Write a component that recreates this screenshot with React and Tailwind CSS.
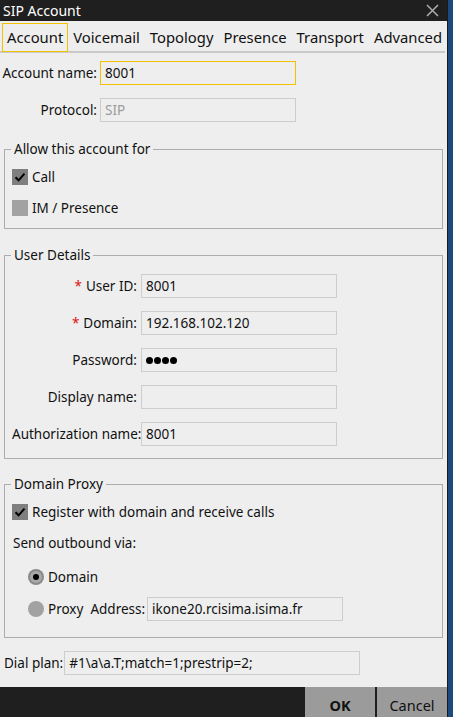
import React from 'react';

const font = { fontFamily: '"Noto Sans", "Open Sans", sans-serif' };

const Field = ({ value, className = '', active = false, muted = false }) => (
  <div
    className={`h-[24px] flex items-center px-[4px] bg-[#eeeeee] border ${
      active ? 'border-[#f2c200]' : 'border-[#cdcdcd]'
    } ${muted ? 'text-[#9c9c9c]' : 'text-[#111]'} ${className}`}
  >
    {value}
  </div>
);

const Check = ({ checked }) => (
  <span
    className={`w-[16px] h-[16px] flex items-center justify-center shrink-0 ${
      checked ? 'bg-[#7f7f7f]' : 'bg-[#a2a2a2]'
    }`}
  >
    {checked && (
      <svg width="12" height="12" viewBox="0 0 12 12">
        <path d="M1.5 6.2 L4.6 9.3 L10.5 2.6" fill="none" stroke="#000" strokeWidth="2" />
      </svg>
    )}
  </span>
);

const Radio = ({ checked }) => (
  <span
    className={`w-[16px] h-[16px] rounded-full flex items-center justify-center shrink-0 ${
      checked ? 'bg-[#8a8a8a]' : 'bg-[#a2a2a2]'
    }`}
  >
    {checked && (
      <span className="w-[12px] h-[12px] rounded-full bg-[#a8a8a8] flex items-center justify-center">
        <span className="w-[6px] h-[6px] rounded-full bg-black" />
      </span>
    )}
  </span>
);

const Group = ({ title, className = '', children }) => (
  <fieldset className={`mx-[4px] w-[439px] border border-[#acacac] px-[7px] ${className}`}>
    <legend className="-ml-[1px] px-[3px] leading-[20px]">{title}</legend>
    {children}
  </fieldset>
);

const DetailRow = ({ label, required, value, className = '' }) => (
  <div className={`flex items-center ${className}`}>
    <div className="w-[129px] text-right pr-[4px] whitespace-nowrap">
      {required && <span className="text-[#e01010] mr-[4px]">*</span>}
      {label}
    </div>
    <Field value={value} className="w-[196px]" />
  </div>
);

const Dots = () => (
  <span className="flex gap-[1px]">
    <span className="w-[7px] h-[7px] rounded-full bg-black" />
    <span className="w-[7px] h-[7px] rounded-full bg-black" />
    <span className="w-[7px] h-[7px] rounded-full bg-black" />
    <span className="w-[7px] h-[7px] rounded-full bg-black" />
  </span>
);

const tabs = ['Account', 'Voicemail', 'Topology', 'Presence', 'Transport', 'Advanced'];

export default function App() {
  return (
    <div className="w-[453px] h-[717px] flex bg-[#1b4a7e] text-[13.5px] text-[#111]" style={font}>
      <div className="w-[448px] h-full flex flex-col bg-[#eeeeee] border-r border-[#1a1a1a]">
        {/* title bar */}
        <div className="h-[21px] bg-[#1f1f1f] flex items-center justify-between pl-[3px] pr-[8px] shrink-0">
          <span className="text-white text-[14px] leading-none">SIP Account</span>
          <svg width="13" height="13" viewBox="0 0 13 13">
            <path d="M1 1 L12 12 M12 1 L1 12" stroke="#a9a9a9" strokeWidth="1.6" />
          </svg>
        </div>

        {/* tabs */}
        <div className="h-[32px] mr-[2px] flex items-start pt-[2px] pl-[2px] border-b-2 border-[#c9c9c9] shrink-0">
          {tabs.map((t, i) => (
            <div
              key={t}
              className={`h-[29px] px-[4px] flex items-center text-[14.8px] whitespace-nowrap border ${
                i === 0 ? 'border-[#f2c200]' : 'border-transparent'
              }`}
            >
              {t}
            </div>
          ))}
        </div>

        {/* account / protocol */}
        <div className="flex items-center mt-[8px]">
          <div className="w-[100px] text-right pr-[3px] whitespace-nowrap">Account name:</div>
          <Field value="8001" active className="w-[196px]" />
        </div>
        <div className="flex items-center mt-[13px]">
          <div className="w-[100px] text-right pr-[3px]">Protocol:</div>
          <Field value="SIP" muted className="w-[196px]" />
        </div>

        <Group title="Allow this account for" className="mt-[17px] pb-[10px]">
          <div className="flex items-center gap-[4px] h-[20px] mt-[8px]">
            <Check checked />
            <span>Call</span>
          </div>
          <div className="flex items-center gap-[4px] h-[20px] mt-[11px]">
            <Check />
            <span>IM / Presence</span>
          </div>
        </Group>

        <Group title="User Details" className="mt-[16px] pb-[12px]">
          <DetailRow label="User ID:" required value="8001" className="mt-[9px]" />
          <DetailRow label="Domain:" required value="192.168.102.120" className="mt-[13px]" />
          <DetailRow label="Password:" value={<Dots />} className="mt-[13px]" />
          <DetailRow label="Display name:" value="" className="mt-[13px]" />
          <DetailRow label="Authorization name:" value="8001" className="mt-[13px]" />
        </Group>

        <Group title="Domain Proxy" className="mt-[15px] pb-[16px]">
          <div className="flex items-center gap-[4px] h-[20px] mt-[8px]">
            <Check checked />
            <span>Register with domain and receive calls</span>
          </div>
          <div className="h-[20px] flex items-center mt-[11px] pl-[1px]">Send outbound via:</div>
          <div className="flex items-center gap-[4px] h-[20px] mt-[14px] pl-[16px]">
            <Radio checked />
            <span>Domain</span>
          </div>
          <div className="flex items-center h-[24px] mt-[10px] pl-[16px]">
            <Radio />
            <span className="ml-[4px]">Proxy</span>
            <span className="ml-[7px]">Address:</span>
            <Field value="ikone20.rcisima.isima.fr" className="ml-[2px] w-[196px]" />
          </div>
        </Group>

        <div className="flex items-center mt-[13px] pl-[4px]">
          <span>Dial plan:</span>
          <Field value="#1\a\a.T;match=1;prestrip=2;" className="ml-[1px] w-[296px]" />
        </div>

        <div className="flex-1" />

        {/* footer */}
        <div className="h-[30px] bg-[#1f1f1f] flex justify-end gap-[2px] shrink-0">
          <button className="w-[70px] h-full pt-[7px] bg-[#9b9b9b] font-bold text-[#111] text-[14.5px]">OK</button>
          <button className="w-[70px] h-full pt-[7px] bg-[#9b9b9b] text-[#111] text-[14.5px]">Cancel</button>
        </div>
      </div>
      <div className="flex-1" />
    </div>
  );
}
